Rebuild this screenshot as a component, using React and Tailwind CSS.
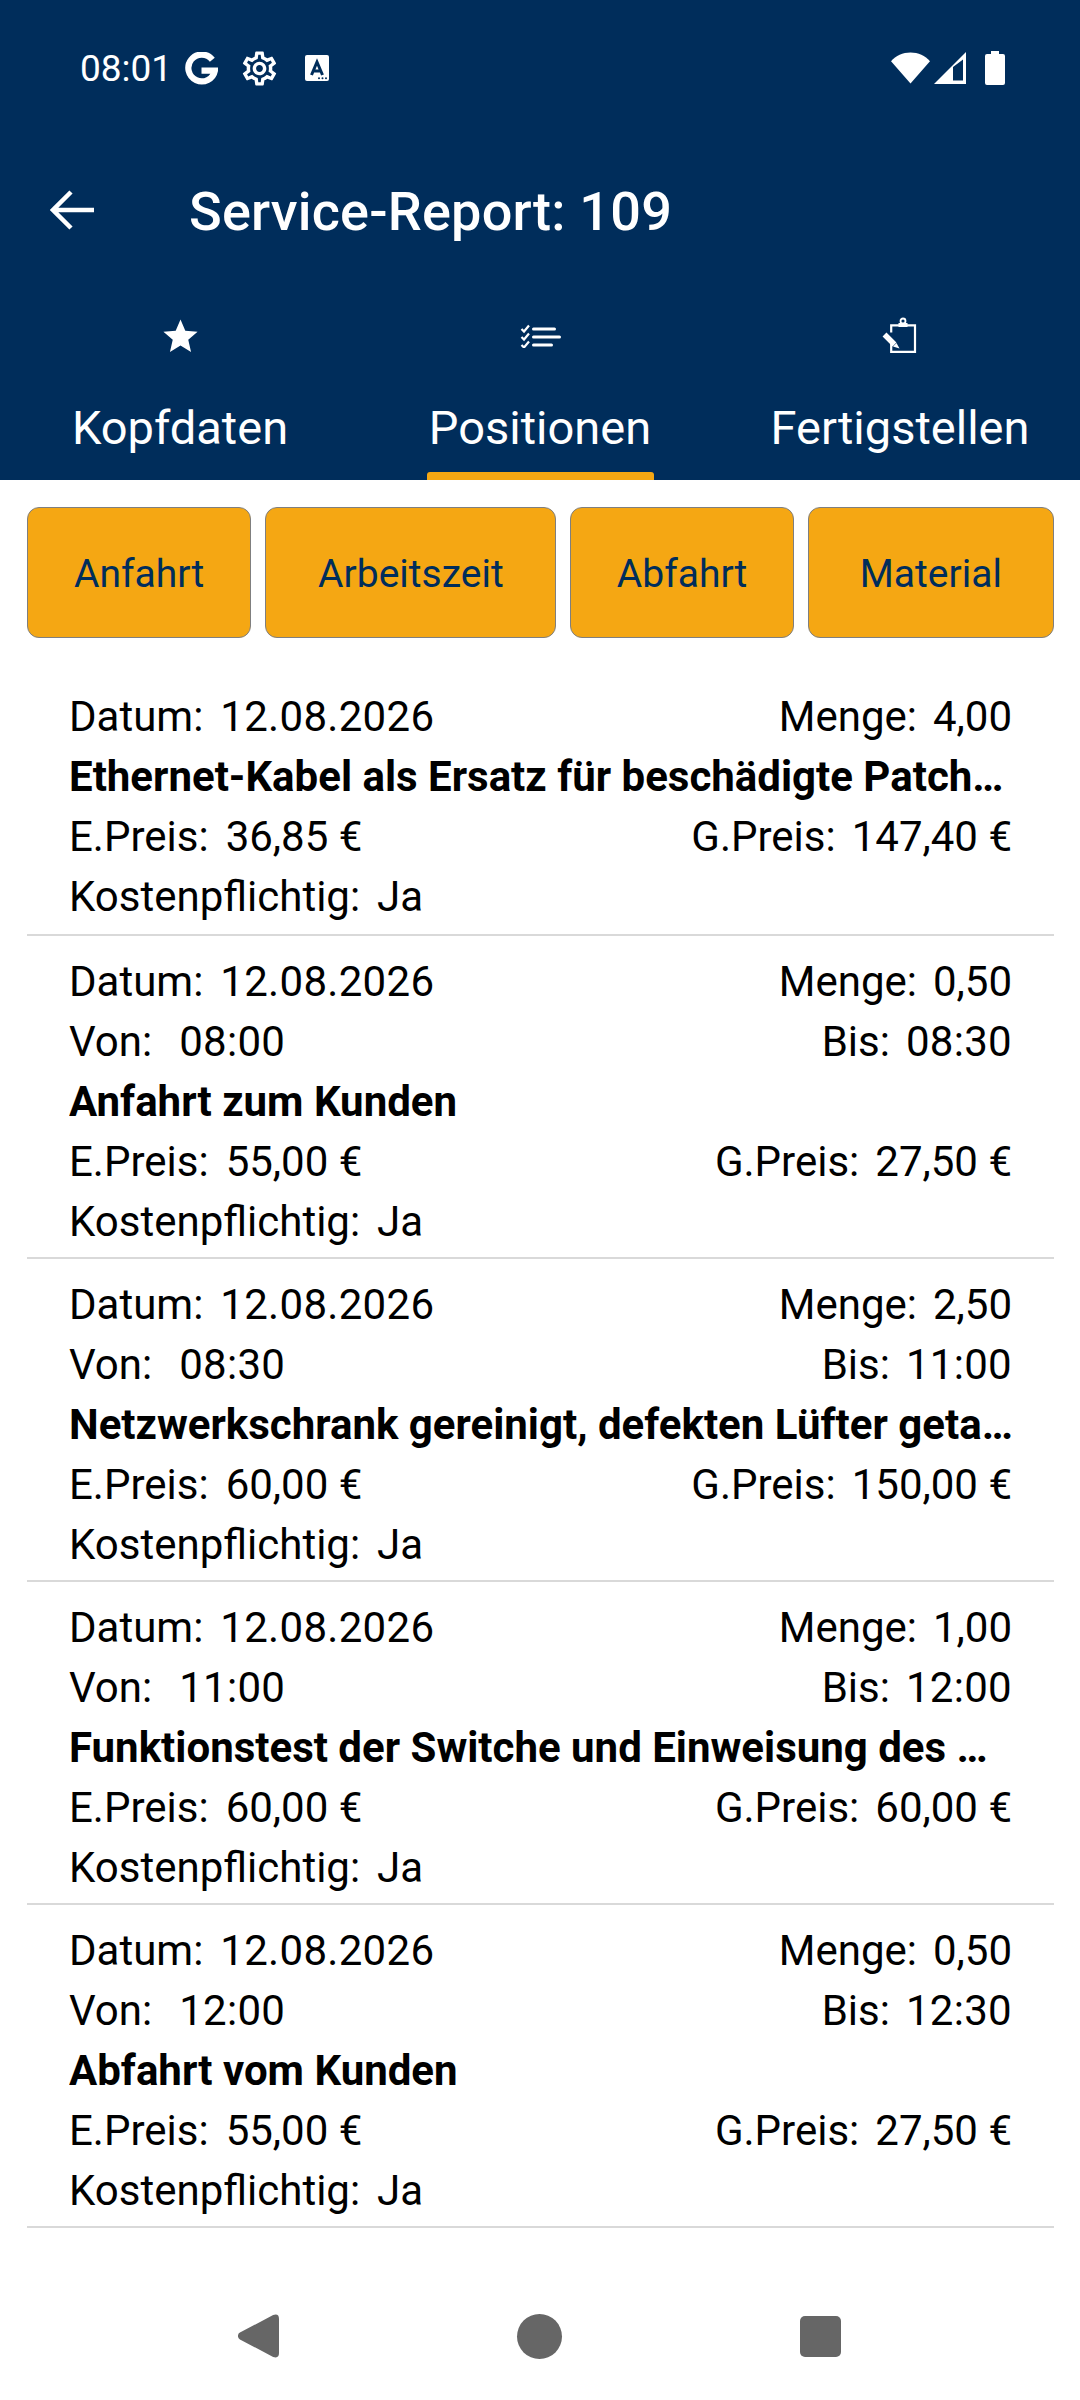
import React from 'react';
import { MdOutlineSettings, MdStar } from 'react-icons/md';

const rows = [
    { qty: '4,00', title: 'Ethernet-Kabel als Ersatz für beschädigte Patchkabel', unit: '36,85 €', total: '147,40 €' },
    { qty: '0,50', from: '08:00', to: '08:30', title: 'Anfahrt zum Kunden', unit: '55,00 €', total: '27,50 €' },
    { qty: '2,50', from: '08:30', to: '11:00', title: 'Netzwerkschrank gereinigt, defekten Lüfter getauscht', unit: '60,00 €', total: '150,00 €' },
    { qty: '1,00', from: '11:00', to: '12:00', title: 'Funktionstest der Switche und Einweisung des Personals', unit: '60,00 €', total: '60,00 €' },
    { qty: '0,50', from: '12:00', to: '12:30', title: 'Abfahrt vom Kunden', unit: '55,00 €', total: '27,50 €' },
];

function StatusBar() {
    return (
        <div className="h-[68px] mt-[34px] flex items-center justify-between pl-[80px] pr-[75px]">
            <div className="flex items-center">
                <span className="text-[37px] leading-none text-white">08:01</span>
                <svg viewBox="0 0 32 32" className="w-[33px] h-[33px] ml-[13px]" fill="none" stroke="#fff" strokeWidth="6">
                    <path d="M26.500 7.500A13 13 0 1 0 29 18H16" />
                </svg>
                <MdOutlineSettings className="w-[41px] h-[41px] ml-[21px] text-white" />
                <svg viewBox="0 0 24 26" className="w-[24px] h-[26px] ml-[25px]">
                    <rect width="24" height="26" rx="2" fill="#fff" />
                    <path d="M6.500 20 12 7l5.500 13M8.500 16h7" fill="none" stroke="#002d5b" strokeWidth="3" />
                    <circle cx="14" cy="23.300" r="1" fill="#002d5b" />
                    <circle cx="17.500" cy="23.300" r="1" fill="#002d5b" />
                    <circle cx="21" cy="23.300" r="1" fill="#002d5b" />
                </svg>
            </div>
            <div className="flex items-center">
                <svg viewBox="0 0 40 32" className="w-[39px] h-[32px]" fill="#fff">
                    <path d="M0 9C5 3 12 0 20 0s15 3 20 9L20 32z" />
                </svg>
                <svg viewBox="0 0 32 32" className="w-[32px] h-[32px] ml-[4px]">
                    <path fillRule="evenodd" fill="#fff" d="M32 0v32H0zM19 15v13.500h10V7.500z" />
                </svg>
                <svg viewBox="0 0 20 34" className="w-[20px] h-[34px] ml-[19px]" fill="#fff">
                    <path d="M6 0h8v3h4a2 2 0 0 1 2 2v27a2 2 0 0 1-2 2H2a2 2 0 0 1-2-2V5a2 2 0 0 1 2-2h4z" />
                </svg>
            </div>
        </div>
    );
}

function Tab({ label, active, children }) {
    return (
        <div className="flex-1 flex flex-col items-center">
            <div className="h-[48px] flex items-center justify-center">{children}</div>
            <div className="mt-[38px] relative h-[82px] w-full flex justify-center">
                <span className="text-[47px] leading-[60px] text-white">{label}</span>
                {active && <span className="absolute bottom-0 left-[67px] w-[227px] h-[8px] rounded-t-[3px] bg-[#f5a713]" />}
            </div>
        </div>
    );
}

function Label({ name, value, gap = 'ml-[16px]', wide }) {
    return (
        <div className="flex whitespace-nowrap">
            <span>{name}</span>
            <span className={wide ? `${gap} tracking-[0.3px]` : gap}>{value}</span>
        </div>
    );
}

function PositionRow({ row }) {
    return (
        <div className="ml-[27px] mr-[26px] pl-[42px] pr-[42px] border-b-2 border-[#d9d9d9] pt-[16px] pb-[5px] first:pb-[7px]">
            <div className="flex justify-between">
                <Label name="Datum:" value="12.08.2026" gap="ml-[17px]" wide />
                <Label name="Menge:" value={row.qty} />
            </div>
            {row.from && (
                <div className="flex justify-between">
                    <Label name="Von:" value={row.from} gap="ml-[27px]" wide />
                    <Label name="Bis:" value={row.to} wide />
                </div>
            )}
            <div className="font-bold truncate -mr-[2px]">{row.title}</div>
            <div className="flex justify-between">
                <Label name="E.Preis:" value={row.unit} gap="ml-[17px]" />
                <Label name="G.Preis:" value={row.total} />
            </div>
            <Label name="Kostenpflichtig:" value="Ja" gap="ml-[17px]" />
        </div>
    );
}

export default function App() {
    return (
        <div className="w-[1080px] h-[2400px] bg-white flex flex-col font-['Roboto',sans-serif]">
            <div className="bg-[#002d5b] h-[480px]">
                <StatusBar />
                <div className="h-[140px] mt-[39px] flex items-center">
                    <svg viewBox="0 0 44 40" className="w-[44px] h-[40px] ml-[50px] -mt-[2px]" fill="none" stroke="#fff" strokeWidth="4.500">
                        <path d="M44 20H3M21 2 3 20l18 18" />
                    </svg>
                    <span className="ml-[95px] text-[54px] font-medium tracking-[0.2px] text-white">Service-Report: 109</span>
                </div>
                <div className="flex mt-[31px]">
                    <Tab label="Kopfdaten">
                        <MdStar className="w-[41px] h-[41px] text-white" />
                    </Tab>
                    <Tab label="Positionen" active>
                        <svg viewBox="0 0 44 24" className="w-[44px] h-[24px] -ml-[2px]" fill="none" stroke="#fff">
                            <path strokeWidth="2.200" d="M4.500 5l2.500 2.500 5-6M4.500 13l2.500 2.500 5-6M4.500 21l2.500 2.500 5-6" />
                            <path strokeWidth="3" strokeLinecap="round" d="M16.500 5h21M16.500 13h26M16.500 21h18" />
                        </svg>
                    </Tab>
                    <Tab label="Fertigstellen">
                        <svg viewBox="0 0 38 38" className="w-[38px] h-[38px]" fill="none" stroke="#fff">
                            <path strokeWidth="2.200" d="M10.200 15.500V8.400H34v26.400H10.200V27" />
                            <circle cx="22" cy="4" r="2.500" strokeWidth="1.800" />
                            <rect x="17.500" y="6" width="9" height="4" fill="#fff" strokeWidth="0" />
                            <path strokeWidth="5.500" d="M3.500 17.500l10 10" />
                            <path fill="#fff" strokeWidth="0" d="M12 29.500l3.500-3.500 3 5.500z" />
                        </svg>
                    </Tab>
                </div>
            </div>

            <div className="flex gap-[14px] pl-[27px] pr-[26px] pt-[27px] pb-[33px] text-[#002d5b] text-[39px]">
                <button className="w-[225px] h-[131px] pt-[4px] rounded-[12px] bg-[#f5a713] border border-[#7f7f7f]">Anfahrt</button>
                <button className="w-[292px] h-[131px] pt-[4px] rounded-[12px] bg-[#f5a713] border border-[#7f7f7f]">Arbeitszeit</button>
                <button className="w-[224px] h-[131px] pt-[4px] rounded-[12px] bg-[#f5a713] border border-[#7f7f7f]">Abfahrt</button>
                <button className="w-[247px] h-[131px] pt-[4px] rounded-[12px] bg-[#f5a713] border border-[#7f7f7f]">Material</button>
            </div>

            <div className="text-[42px] leading-[60px] text-black">
                {rows.map((row, i) => (
                    <PositionRow key={i} row={row} />
                ))}
            </div>

            {/* three-button navigation */}
            <div className="mt-auto h-[128px] flex items-center pl-[238px] gap-[238px]">
                <svg viewBox="0 0 42 46" className="w-[41px] h-[46px]" fill="#666">
                    <path d="M36 1.500 2 19.500a4 4 0 0 0 0 7l34 18q6 2 6-4V5.500q0-6-6-4z" />
                </svg>
                <div className="w-[45px] h-[45px] rounded-full bg-[#666]" />
                <div className="w-[41px] h-[41px] rounded-[5px] bg-[#666]" />
            </div>
        </div>
    );
}
